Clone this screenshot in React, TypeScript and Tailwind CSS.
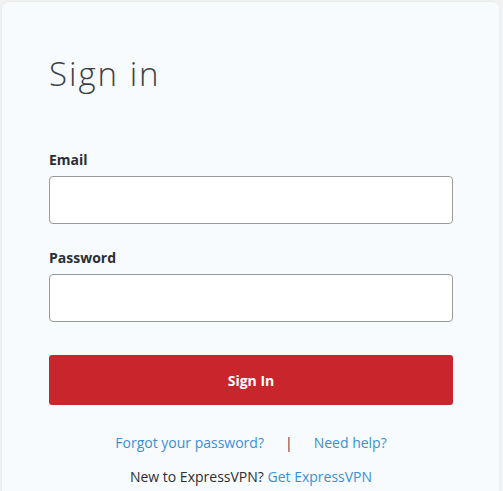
export default function App() {
  return (
    <div className="h-[491px] overflow-hidden bg-[#f2f2f2] px-[2px] pt-[2px] font-['Open_Sans',sans-serif]">
      <div className="h-[600px] w-[497px] rounded-[6px] bg-[#f7fbfe] pl-[47px] pr-[46px] pt-[48px] shadow-[0_0_2px_rgba(0,0,0,0.08)]">
        <h1 className="text-[33px] font-light leading-[48px] tracking-[2px] text-[#3a3f47]">Sign in</h1>

        <form className="mt-[52px] flex flex-col">
          <label className="text-[14px] font-bold leading-[20px] text-[#2b2e33]">Email</label>
          <input
            type="email"
            className="mt-[6px] h-[48px] w-full rounded-[4px] border border-[#9a9a9a] bg-white px-3 outline-none"
          />

          <label className="mt-[24px] text-[14px] font-bold leading-[20px] text-[#2b2e33]">Password</label>
          <input
            type="password"
            className="mt-[6px] h-[48px] w-full rounded-[4px] border border-[#9a9a9a] bg-white px-3 outline-none"
          />

          <button
            type="button"
            className="mt-[33px] h-[50px] w-full rounded-[3px] bg-[#c8252c] text-[14px] font-bold text-white"
          >
            Sign In
          </button>
        </form>

        <div className="mt-[26px] flex items-center justify-center text-[14px] leading-[24px]">
          <a href="#" className="text-[#3a8fd6]">Forgot your password?</a>
          <span className="mx-[21px] text-[#3a3f47]">|</span>
          <a href="#" className="text-[#3a8fd6]">Need help?</a>
        </div>
        <p className="mt-[10px] text-center text-[14px] leading-[24px] text-[#2b2e33]">
          New to ExpressVPN? <a href="#" className="text-[#3a8fd6]">Get ExpressVPN</a>
        </p>
      </div>
    </div>
  );
}
